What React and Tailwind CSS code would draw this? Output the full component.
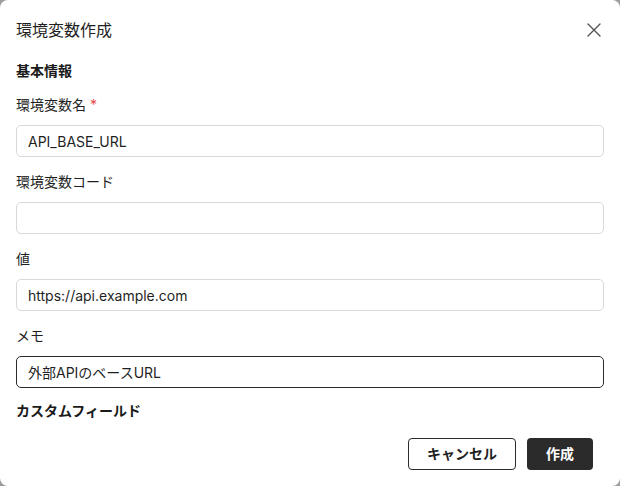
import React from 'react';
import { X } from 'lucide-react';

const font = { fontFamily: 'Inter, "Noto Sans CJK JP", sans-serif' };

const fields = [
    { label: '環境変数名', value: 'API_BASE_URL', required: true },
    { label: '環境変数コード', value: '' },
    { label: '値', value: 'https://api.example.com' },
    { label: 'メモ', value: '外部APIのベースURL', focused: true },
];

const Field = ({ label, value, required, focused }) => (
    <div className="flex flex-col gap-[10px]">
        <label className="text-sm leading-5 text-[#1f1f1f]">
            {label}
            {required && <span className="ml-1 text-[#e5484d]">*</span>}
        </label>
        <input
            readOnly
            value={value}
            className={`h-8 w-full rounded-[5px] border bg-white pl-[11px] pr-3 text-sm text-[#1f1f1f] outline-none ${focused ? 'border-[#2b2b2b]' : 'border-[#d9d9d9]'}`}
            style={font}
        />
    </div>
);

export default function App() {
    return (
        <div className="h-[486px] w-[620px] bg-[#9c9c9c]" style={font}>
            <div className="flex h-full w-full flex-col rounded-lg bg-white">
                {/* Header */}
                <div className="flex items-center justify-between pl-4 pr-[14px] pt-[18px]">
                    <h2 className="text-base leading-5 text-[#1f1f1f]">環境変数作成</h2>
                    <X size={24} strokeWidth={1.4} className="text-[#555]" />
                </div>

                {/* Body */}
                <div className="mt-[19px] flex flex-col px-4">
                    <h3 className="text-sm font-bold leading-5 text-[#1a1a1a]">基本情報</h3>
                    <div className="mt-[14px] flex flex-col gap-[15px]">
                        {fields.map((f) => (
                            <Field key={f.label} {...f} />
                        ))}
                    </div>
                    <h3 className="mt-[13px] text-sm font-bold leading-5 text-[#1a1a1a]">カスタムフィールド</h3>
                </div>

                {/* Footer */}
                <div className="mt-auto flex justify-end gap-[11px] pb-4 pr-[27px]">
                    <button className="h-8 rounded-[4px] border border-[#2b2b2b] bg-white px-[18px] text-sm font-bold text-[#1f1f1f]">
                        キャンセル
                    </button>
                    <button className="h-8 rounded-[4px] bg-[#2b2b2b] px-[19px] text-sm font-bold text-white">
                        作成
                    </button>
                </div>
            </div>
        </div>
    );
}
